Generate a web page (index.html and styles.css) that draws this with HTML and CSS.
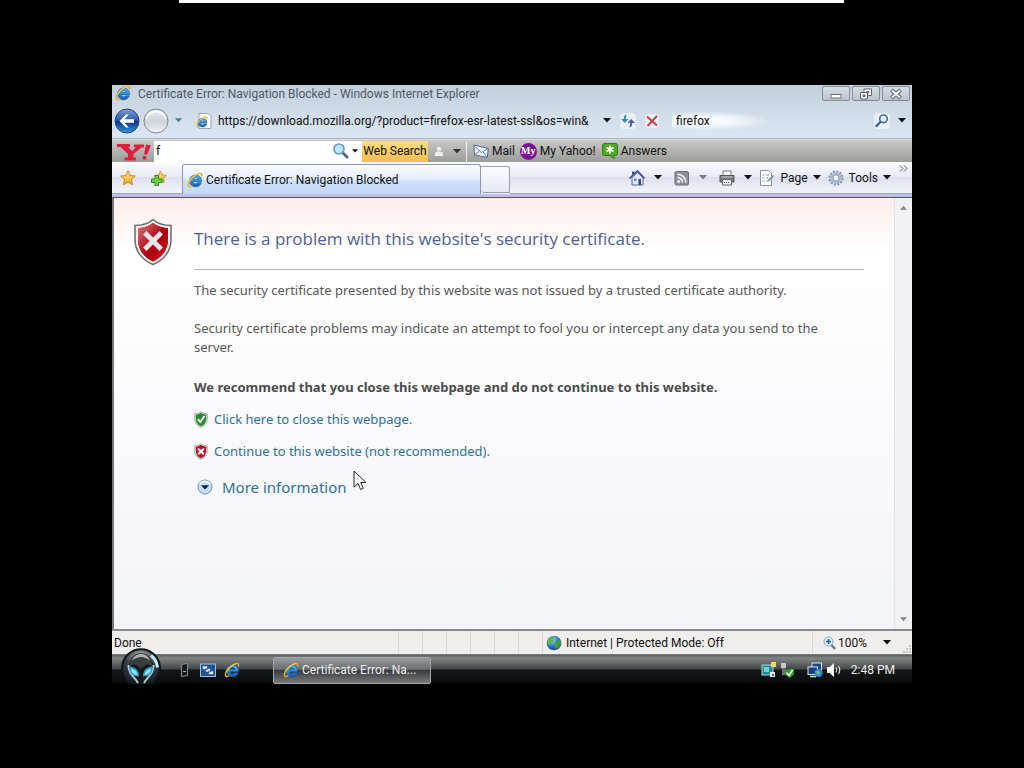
FILE: index.html
```html
<!DOCTYPE html>
<html lang="en">
<head>
<meta charset="utf-8">
<title>Certificate Error: Navigation Blocked</title>
<link rel="stylesheet" href="styles.css">
</head>
<body>
<svg class="defs" aria-hidden="true">
  <defs>
    <linearGradient id="ieBlue" x1="0" y1="0" x2="0" y2="1"><stop offset="0" stop-color="#4cbcf3"/><stop offset="1" stop-color="#1259b4"/></linearGradient>
    <linearGradient id="orb" x1="0" y1="0" x2="0" y2="1"><stop offset="0" stop-color="#7d9fd6"/><stop offset=".48" stop-color="#2a57a8"/><stop offset=".5" stop-color="#0d2f82"/><stop offset="1" stop-color="#2f9be0"/></linearGradient>
    <linearGradient id="orbGrey" x1="0" y1="0" x2="0" y2="1"><stop offset="0" stop-color="#e9edf2"/><stop offset=".5" stop-color="#ccd4dd"/><stop offset="1" stop-color="#eef1f5"/></linearGradient>
    <linearGradient id="red" x1="0" y1="0" x2="1" y2="1"><stop offset="0" stop-color="#dd7a80"/><stop offset=".45" stop-color="#b3121f"/><stop offset=".6" stop-color="#a80410"/><stop offset="1" stop-color="#e02020"/></linearGradient>
    <linearGradient id="gold" x1="0" y1="0" x2="0" y2="1"><stop offset="0" stop-color="#ffe98a"/><stop offset="1" stop-color="#f2a51c"/></linearGradient>
    <radialGradient id="globeFill" cx=".4" cy=".3" r=".75"><stop offset="0" stop-color="#8fd0ff"/><stop offset=".6" stop-color="#2a6fc4"/><stop offset="1" stop-color="#153f86"/></radialGradient>
    <radialGradient id="startFill" cx=".5" cy=".2" r=".9"><stop offset="0" stop-color="#a9acaf"/><stop offset=".45" stop-color="#3b4044"/><stop offset="1" stop-color="#07141a"/></radialGradient>
  </defs>
  <symbol id="ie" viewBox="0 0 16 16">
    <path d="M14.600 9.700H6.200c.1 1.300 1 2.100 2.400 2.100.9 0 1.600-.3 2.100-1h3.600c-.8 2.700-3 4-5.700 4-3.600 0-6-2.400-6-5.800s2.500-6 6-6c3.700 0 6.200 2.600 6 6.700zM6.300 7.300h4.600c-.1-1.100-1-1.800-2.200-1.800s-2.200.7-2.400 1.800z" fill="url(#ieBlue)" stroke="#15589f" stroke-width=".6"/>
    <path d="M14.600 4c.5-2.400-.9-3.100-3.200-2.300C7.500 3 3 7.200 1.700 11c-1 3.200.3 4.300 3 2.900" fill="none" stroke="#e5ab22" stroke-width="1.500" stroke-linecap="round"/>
    <path d="M12.500 1.700C9 2.200 4.500 6 2.600 9.500" fill="none" stroke="#f9e07a" stroke-width=".7"/>
  </symbol>
  <symbol id="caret" viewBox="0 0 8 5"><path d="M0 0h8L4 4.500z" fill="currentColor"/></symbol>
  <symbol id="star" viewBox="0 0 16 16"><path d="M8 .8l2.200 4.700 5.100.6-3.800 3.500 1 5.100L8 12.200l-4.500 2.500 1-5.100L.7 6.100l5.100-.6z" fill="url(#gold)" stroke="#c98516" stroke-width="1" stroke-linejoin="round"/></symbol>
  <symbol id="shield" viewBox="0 0 40 48">
    <path d="M20 1.500C15 6 8 7.500 2 7.500v14C2 33 9 42 20 46.500 31 42 38 33 38 21.500v-14c-6 0-13-1.500-18-6z" fill="#f1efef" stroke="#676c69" stroke-width="1.500"/>
    <path d="M20 5C15.500 8.500 10 10 5 10.300v11.200C5 31.500 11 39.500 20 43.400c9-3.900 15-11.900 15-21.900V10.300C30 10 24.500 8.500 20 5z" fill="currentColor"/>
  </symbol>
</svg>

<div class="top-strip"></div>
<main class="desktop">
  <section class="window">
    <header class="titlebar">
      <svg class="i16"><use href="#ie"/></svg>
      <h1 class="title">Certificate Error: Navigation Blocked - Windows Internet Explorer</h1>
      <div class="controls">
        <button class="control" aria-label="Minimize"><svg width="12" height="12" viewBox="0 0 12 12"><rect x="1" y="6.500" width="10" height="3.500" fill="#fff" stroke="#6a7078"/></svg></button>
        <button class="control" aria-label="Restore"><svg width="14" height="12" viewBox="0 0 14 12"><path d="M5 1h7.500v6.500H5z M7.500 3.500h2.500v1.500H7.500z" fill="#fff" stroke="#5d636b"/><path d="M1.500 4.500h7v6.500h-7z" fill="#fff" stroke="#5d636b"/><path d="M4 7h2v1.500H4z" fill="#aaa" stroke="#5d636b"/></svg></button>
        <button class="control" aria-label="Close"><svg width="14" height="12" viewBox="0 0 14 12"><path d="M2.500 2l9 8m0-8l-9 8" stroke="#5d636b" stroke-width="4"/><path d="M3 2.400l8 7.200m0-7.200l-8 7.200" stroke="#fff" stroke-width="2"/></svg></button>
      </div>
    </header>

    <nav class="navbar">
      <button class="plain" aria-label="Back"><svg width="26" height="26" viewBox="0 0 26 26"><circle cx="13" cy="13" r="12" fill="url(#orb)" stroke="#26447c"/><path d="M5.500 13L12 6.500h2.800l-4.300 4.700H20v3.600h-9.500l4.300 4.700H12z" fill="#fff"/></svg></button>
      <button class="plain" aria-label="Forward"><svg width="26" height="26" viewBox="0 0 26 26"><circle cx="13" cy="13" r="12" fill="url(#orbGrey)" stroke="#7f8893"/><path d="M3 11a10.500 10.500 0 0 1 20 0" fill="none" stroke="#fff" stroke-width="1.500"/></svg></button>
      <button class="plain recent" aria-label="Recent pages"><svg class="caret"><use href="#caret"/></svg></button>
      <svg class="i16 page-icon" viewBox="0 0 16 16"><path d="M3 .5h9l3 3v12H3z" fill="#fff" stroke="#9ba3ac"/><svg x="0" y="3" width="12" height="12"><use href="#ie"/></svg></svg>
      <input class="address" type="text" aria-label="Address" value="https://download.mozilla.org/?product=firefox-esr-latest-ssl&amp;os=win&amp;">
      <button class="plain address-drop" aria-label="Address history"><svg class="caret"><use href="#caret"/></svg></button>
      <button class="plain glow" aria-label="Refresh"><svg width="16" height="16" viewBox="0 0 16 16"><path d="M7 1.500C4.500 1.800 3.800 3 3.800 6H1l3.800 4L8.500 6H5.800c0-2 .2-3 1.200-4.500z" fill="#3f86b8"/><path d="M9 14.500c2.500-.3 3.200-1.500 3.200-4.500H15l-3.800-4L7.500 10h2.700c0 2-.2 3-1.200 4.500z" fill="#4a5fa0"/></svg></button>
      <button class="plain glow stop" aria-label="Stop"><svg width="14" height="14" viewBox="0 0 14 14"><path d="M2 2.500l10 9M12 2L2.500 12" stroke="#c8414e" stroke-width="2"/></svg></button>
      <input class="search" type="text" aria-label="Search" value="firefox">
      <button class="plain glow" aria-label="Go"><svg width="16" height="16" viewBox="0 0 16 16"><circle cx="9.500" cy="5.800" r="3.800" fill="#e4f2fb" stroke="#3f7196" stroke-width="1.600"/><path d="M6.700 8.700L1.800 13.600" stroke="#3a5f85" stroke-width="2.200"/></svg></button>
      <button class="plain search-drop" aria-label="Search options"><svg class="caret"><use href="#caret"/></svg></button>
    </nav>

    <div class="yahoo">
      <svg class="ylogo" width="40" height="20" viewBox="0 0 40 20" role="img" aria-label="Yahoo"><path d="M3 3h13v3h-2l4 4 4-3.500h-2v-3h10v3h-2.500l-8 6.500v3.500h2.500v3H10.500v-3H14v-3.500L6.500 6H3z" fill="#df1f3d"/><path d="M32 3.500l5 1-4 9h-3z" fill="#df1f3d"/><circle cx="30.500" cy="16.800" r="2" fill="#df1f3d"/></svg>
      <div class="ybox">
        <input class="yinput" type="text" aria-label="Yahoo search" value="f">
        <svg width="18" height="18" viewBox="0 0 18 18"><path d="M10.500 10.500l5.500 5.500" stroke="#45637d" stroke-width="2.600"/><circle cx="7" cy="7" r="5" fill="#bfe5fb" stroke="#6b9cc4" stroke-width="1.700"/></svg>
        <svg class="caret small"><use href="#caret"/></svg>
      </div>
      <button class="websearch">Web Search</button>
      <button class="plain person" aria-label="Profile"><svg width="14" height="14" viewBox="0 0 14 14"><circle cx="7" cy="5" r="2.200" fill="#eee"/><path d="M3 12V9.500C3 8 4.500 7.500 7 7.500s4 .5 4 2V12z" fill="#eee"/></svg><svg class="caret"><use href="#caret"/></svg></button>
      <a class="ylink first" href="#"><svg class="i16" viewBox="0 0 16 16"><path d="M.8 2l14.500 3.500-1 9L1.500 12z" fill="#f5f9ff" stroke="#4d6796"/><path d="M.8 2.500l7.700 7 6.500-4M1.500 12l5-4M14.300 14.300L10 8.800" fill="none" stroke="#5e7aab"/></svg>Mail</a>
      <a class="ylink" href="#"><span class="my">My</span>My Yahoo!</a>
      <a class="ylink answers" href="#"><svg class="i16" viewBox="0 0 16 16"><path d="M2.500.5h11a2 2 0 0 1 2 2v8a2 2 0 0 1-2 2H12V16l-4-3.500H2.500a2 2 0 0 1-2-2v-8a2 2 0 0 1 2-2z" fill="#52a928" stroke="#2f7d14"/><path d="M8 2.500v8M4.500 4.500l7 4M11.500 4.500l-7 4" stroke="#fff" stroke-width="1.600"/></svg>Answers</a>
    </div>

    <div class="tabs">
      <div class="favs">
        <button class="plain" aria-label="Favorites"><svg class="i16"><use href="#star"/></svg></button>
        <button class="plain" aria-label="Add to favorites"><svg class="i16" viewBox="0 0 16 16"><svg x="3" y="0" width="13" height="14"><use href="#star"/></svg><path d="M4 5.500h3.500V9H11v3.500H7.500V16H4v-3.500H.5V9H4z" fill="#6fd04a" stroke="#2c8a1d"/></svg></button>
      </div>
      <button class="tab"><svg class="i16"><use href="#ie"/></svg>Certificate Error: Navigation Blocked</button>
      <button class="newtab" aria-label="New tab"></button>
      <div class="commands">
        <button class="plain" aria-label="Home"><svg class="i16" viewBox="0 0 16 16"><path d="M3 7.500V15h11V7.500L8.500 2.500z" fill="#dfe8f4" stroke="#59698c"/><path d="M3 1.500h2.500v3H3z" fill="#4e3f92"/><path d="M.5 8.500L8.500 1l7 7.500" fill="none" stroke="#46508e" stroke-width="1.600"/><path d="M9.500 9h2.500v6H9.500z" fill="#35497e"/><path d="M5 8.500h2.500V11H5z" fill="#5d90c9"/></svg><svg class="caret"><use href="#caret"/></svg></button>
        <button class="plain muted" aria-label="Feeds"><svg class="i16" viewBox="0 0 16 16"><rect x="1" y="1.500" width="13.500" height="13.500" rx="1.500" fill="#8d9197" stroke="#6d7176"/><circle cx="4.700" cy="11.500" r="1.400" fill="#fff"/><path d="M3.500 7.500a5 5 0 0 1 5 5M3.500 4.200a8.300 8.300 0 0 1 8.300 8.300" fill="none" stroke="#fff" stroke-width="1.500"/></svg><svg class="caret"><use href="#caret"/></svg></button>
        <button class="plain" aria-label="Print"><svg class="i16" viewBox="0 0 16 16"><path d="M4 1h8v5H4z" fill="#fff" stroke="#777"/><path d="M1 5.500h14v6.500H1z" fill="#777b83" stroke="#50545b"/><path d="M2.500 7h11" stroke="#c8ccd2"/><path d="M3.500 9.500h9V15h-9z" fill="#f4f4f4" stroke="#666"/><path d="M5 12.500h6" stroke="#555" stroke-dasharray="1 1"/></svg><svg class="caret"><use href="#caret"/></svg></button>
        <button class="plain tight"><svg class="i16" viewBox="0 0 16 16"><path d="M1.500.5h8l3 3v12h-11z" fill="#fafcfd" stroke="#8b939b"/><path d="M3.500 5h2M7 5h3M3.500 8h2M7 8h2M3.500 11h2M7 11h3" stroke="#8396a8"/><path d="M9.500 10.500l5-5" stroke="#8e9d8c" stroke-width="2"/></svg><span>Page</span><svg class="caret"><use href="#caret"/></svg></button>
        <button class="plain tight"><svg class="i16" viewBox="0 0 16 16"><circle cx="8" cy="8" r="6.600" fill="none" stroke="#8799af" stroke-width="2" stroke-dasharray="2.200 1.255"/><circle cx="8" cy="8" r="4.500" fill="#eef3f8" stroke="#a5b9cf" stroke-width="2.600"/><circle cx="8" cy="8" r="3" fill="none" stroke="#7389a5" stroke-width=".7"/></svg><span>Tools</span><svg class="caret"><use href="#caret"/></svg></button>
        <button class="plain more" aria-label="More commands"><svg width="9" height="7" viewBox="0 0 9 7"><path d="M1 .5l3 3-3 3M5 .5l3 3-3 3" fill="none" stroke="#555b6a"/></svg></button>
      </div>
    </div>

    <div class="viewport">
      <article class="page">
        <svg class="big-shield" viewBox="0 0 40 48"><g color="#a90a18"><use href="#shield"/></g><path d="M20 5C15.500 8.500 10 10 5 10.300v11.200C5 31.500 11 39.500 20 43.400c9-3.900 15-11.900 15-21.900V10.300C30 10 24.500 8.500 20 5z" fill="url(#red)"/><path d="M13.500 16.500l13 13M26.500 16.500l-13 13" stroke="#ece4e8" stroke-width="4.800" stroke-linecap="square"/></svg>
        <div class="message">
          <h2 class="heading">There is a problem with this website's security certificate.</h2>
          <p class="para">The security certificate presented by this website was not issued by a trusted certificate authority.</p>
          <p class="para wide">Security certificate problems may indicate an attempt to fool you or intercept any data you send to the server.</p>
          <p class="para strong">We recommend that you close this webpage and do not continue to this website.</p>
          <a class="action" href="#"><svg width="14" height="17" viewBox="0 0 40 48"><g color="#2b8a2a"><use href="#shield"/></g><path d="M11 23l7 8L30 14" fill="none" stroke="#fff" stroke-width="5.500"/></svg>Click here to close this webpage.</a>
          <a class="action" href="#"><svg width="14" height="17" viewBox="0 0 40 48"><g color="#b2182b"><use href="#shield"/></g><path d="M12 16l16 16M28 16L12 32" stroke="#fff" stroke-width="5.500"/></svg>Continue to this website (not recommended).</a>
          <a class="action info" href="#"><svg width="16" height="16" viewBox="0 0 16 16"><circle cx="8" cy="8" r="7" fill="#c6dff5" stroke="#7290b0"/><path d="M3 5a6 6 0 0 1 10 0" fill="none" stroke="#fff" stroke-width="1.500"/><path d="M4 6.300h8L8 10.500z" fill="#10204a"/></svg>More information</a>
        </div>
      </article>
      <div class="scrollbar"><svg class="caret up"><use href="#caret"/></svg><svg class="caret"><use href="#caret"/></svg></div>
      <svg class="cursor" width="15" height="21" viewBox="0 0 15 21"><path d="M1 1v16l4-3.500 2.700 6 2.600-1.200-2.600-5.800H13z" fill="#fff" stroke="#222"/></svg>
    </div>

    <footer class="status">
      <span class="done">Done</span>
      <span class="cell"></span><span class="cell"></span><span class="cell"></span><span class="cell"></span><span class="cell"></span><span class="cell"></span>
      <span class="zone"><svg class="i16" viewBox="0 0 16 16"><circle cx="8" cy="8" r="7.300" fill="url(#globeFill)"/><path d="M2 4.500C4 1.500 8 1 9 2L7 4.500 7.500 7 4.500 8 3.500 11 1 8z" fill="#5cb544"/><path d="M10 6l4-1 1 4-3.500 5-3-1L9 10z" fill="#3d9c3f"/></svg>Internet | Protected Mode: Off</span>
      <button class="plain zoom"><svg width="13" height="14" viewBox="0 0 13 14"><path d="M8 8.500l4 4.500" stroke="#77787c" stroke-width="2.500"/><circle cx="5.500" cy="5.500" r="4.500" fill="#e6f4ff" stroke="#7ea6cc"/><path d="M5.500 3v5M3 5.500h5" stroke="#225f9e" stroke-width="1.600"/></svg><span>100%</span><svg class="caret"><use href="#caret"/></svg></button>
      <svg class="grip" width="10" height="10" viewBox="0 0 10 10"><path d="M7 1h2v2H7zM7 4h2v2H7zM7 7h2v2H7zM4 4h2v2H4zM4 7h2v2H4zM1 7h2v2H1z" fill="#c9c7c4"/></svg>
    </footer>
  </section>

  <section class="taskbar">
    <button class="plain start" aria-label="Start"><svg width="42" height="36" viewBox="0 0 42 36"><path d="M6 32A19 19 0 1 1 36 32L33 36H9z" fill="url(#startFill)"/><path d="M6 32A19 19 0 1 1 36 32" fill="none" stroke="#0d1519" stroke-width="2"/><path d="M31 7.500c4 3 6 7 6.500 12" fill="none" stroke="#bde9ef" stroke-width="3"/><path d="M21 7C13 7 9 12 9 18c0 7 6 12 9 17h6c3-5 9-10 9-17 0-6-4-11-12-11z" fill="#17191b"/><path d="M10 19C9.500 9 15 5 21 5s11.500 4 11 14c-3-4-7-3-11 2-4-5-8-6-11-2z" fill="#3a3d40"/><path d="M12 13C14 7 18 6 21 6s7 1 9 7c-3-3-6-4-9-4s-6 1-9 4z" fill="#aeb1b4"/><path d="M8.500 17c0 10 6 11 9.500 18M33.500 17c0 10-6 11-9.500 18" fill="none" stroke="#b7c7cf" stroke-width="2"/><path d="M9 18.500c7 .5 10 4 10 10-6 0-10-3-10-10zM33 18.500c-7 .5-10 4-10 10 6 0 10-3 10-10z" fill="#2f9fc9"/><path d="M11 20.500c4 1 6 3 6.500 6.500-4-.5-6.500-3-6.500-6.500zM31 20.500c-4 1-6 3-6.500 6.500 4-.5 6.500-3 6.500-6.500z" fill="#8fe4fa"/></svg></button>
    <div class="quick">
      <button class="plain" aria-label="Device"><svg width="10" height="16" viewBox="0 0 10 16"><path d="M1.500 2.500l6-1v12l-6 1z" fill="#17191c" stroke="#8b8f93"/><path d="M3 9.500h3" stroke="#aaa"/></svg></button>
      <button class="plain" aria-label="Switch windows"><svg width="16" height="16" viewBox="0 0 16 16"><rect x=".5" y="2" width="15" height="12.500" fill="#23508f" stroke="#9dbde0"/><path d="M2.500 4h5v3.500h-5zM5.500 6.500h5V10h-5zM8.500 9h5v3.500h-5z" fill="#e8f1fc" stroke="#23508f" stroke-width=".7"/></svg></button>
      <button class="plain" aria-label="Internet Explorer"><svg class="i16"><use href="#ie"/></svg></button>
    </div>
    <button class="task"><svg class="i16"><use href="#ie"/></svg>Certificate Error: Na...</button>
    <div class="tray">
      <svg class="i16" viewBox="0 0 16 16"><rect x="1" y="3" width="11" height="10" fill="#1f8b94" stroke="#a8dce0"/><path d="M3 5h5v5H3z" fill="#73d1cd"/><path d="M10 0h5v5h-5z" fill="#f0d862"/><path d="M9 10h5v5H9z" fill="#eee"/><path d="M11 12h2v2h-2z" fill="#555"/></svg>
      <svg class="i16" viewBox="0 0 16 16"><path d="M1 1h5v5H1z" fill="#c8c8c8"/><path d="M2 6h3v7H2z" fill="#707070"/><path d="M5 7.500l9-1v6L10 16l-5-3z" fill="#2d9a27"/><path d="M6.500 10.500l2.500 3 3.500-5.500" fill="none" stroke="#fff" stroke-width="1.500"/></svg>
      <svg class="i16 net" viewBox="0 0 16 16"><rect x="5" y="1" width="9.500" height="7.500" fill="#1c4a86" stroke="#d9e9f5"/><rect x="1" y="5" width="9.500" height="7.500" fill="#173f76" stroke="#d9e9f5"/><path d="M3 14.500h6" stroke="#cfe0ee" stroke-width="1.500"/><circle cx="11.500" cy="11" r="4" fill="#2f87cf"/><path d="M9 9.500l3-1 1 2-2 3z" fill="#72c658"/></svg>
      <svg class="i16" viewBox="0 0 16 16"><path d="M1 5h2.500L8 1v14l-4.500-4H1z" fill="#f4f4f4"/><path d="M10 5.500q1.500 2.500 0 5M12.500 4q2.500 4 0 8" fill="none" stroke="#ddd" stroke-width="1.200"/></svg>
      <time class="clock">2:48 PM</time>
    </div>
  </section>
</main>
</body>
</html>
```
FILE: styles.css
```css
* { box-sizing: border-box; }

body {
  margin: 0;
  min-height: 100vh;
  background: #000;
  color: #111;
  font: 12px/16px Roboto, "Noto Sans", sans-serif;
  display: flex;
  flex-direction: column;
}

button, input { font: inherit; color: inherit; }
input { border: 0; padding: 0; min-width: 0; background: transparent; outline: 0; }
h1, h2, p { margin: 0; }
a { text-decoration: none; color: inherit; }
svg { display: block; flex: none; }

.defs { position: absolute; width: 0; height: 0; }
.i16 { width: 16px; height: 16px; }
.caret { width: 8px; height: 5px; }
.caret.small { width: 6px; height: 4px; }
.plain {
  display: flex;
  align-items: center;
  border: 0;
  padding: 0;
  background: transparent;
}

.top-strip { height: 3px; margin: 0 180px 0 179px; background: #fff; }

.desktop {
  flex: 1;
  display: flex;
  flex-direction: column;
  padding: 82px 112px 83px;
}

.window {
  flex: 1;
  display: flex;
  flex-direction: column;
  background: linear-gradient(#c3cfdb, #dbe7f3 54px);
}

.titlebar { display: flex; height: 18px; padding: 0 2px 0 3px; gap: 7px; }
.title { flex: 1; font-size: 12px; line-height: 18px; font-weight: 400; color: #4f5b69; white-space: nowrap; }
.controls { display: flex; gap: 2px; padding-top: 1px; }
.control {
  width: 28px;
  height: 15px;
  padding: 0;
  display: flex;
  align-items: center;
  justify-content: center;
  border: 1px solid #858e98;
  border-radius: 2px;
  background: linear-gradient(#d5dde5, #bcc5cf);
}

.navbar { display: flex; align-items: center; height: 36px; padding: 0 6px 0 2px; gap: 3px; border-bottom: 1px solid #a9b1ba; }
.recent { color: #3c8088; margin-left: 3px; }
.recent .caret { width: 7px; }
.page-icon { margin-left: 11px; }
.address { flex: 382; width: 0; padding-left: 3px; }
.address-drop { width: 14px; }
.glow { border-radius: 4px; background: rgba(255, 255, 255, .5); }
.stop { margin-left: 6px; }
.search {
  flex: 195;
  width: 0;
  height: 18px;
  margin-left: 10px;
  padding-left: 4px;
  background: radial-gradient(ellipse 70px 10px at 30px 9px, #f6faff 40%, transparent);
}
.search-drop { margin-left: 5px; }

.yahoo {
  display: flex;
  height: 23px;
  align-items: center;
  background: linear-gradient(#c9c9c7, #9c9c9a);
  border-top: 1px solid #dcdfe0;
}
.ylogo { margin-left: 2px; }
.ybox { flex: 0 1 208px; display: flex; align-items: center; height: 21px; padding: 0 4px 0 2px; gap: 2px; background: #fff; }
.yinput { flex: 1; }
.websearch {
  height: 21px;
  width: 66px;
  padding: 0;
  border: 0;
  background: linear-gradient(#fbdc86, #f2bd4f);
  white-space: nowrap;
}
.person { gap: 7px; padding: 0 5px 0 4px; color: #333; height: 21px; border-right: 1px solid #eee; }
.ylink { display: flex; align-items: center; gap: 3px; margin-left: 5px; white-space: nowrap; }
.ylink.first { margin-left: 6px; }
.ylink.answers { margin-left: 6px; }
.my {
  width: 17px;
  height: 17px;
  border-radius: 50%;
  background: #7b1490;
  color: #fff;
  font: bold 10px/16px "Liberation Serif", serif;
  text-align: center;
}

.tabs {
  display: flex;
  height: 35px;
  background: linear-gradient(#fafbfe, #e9ebf5 45%, #dcdff0 47%, #eef0fa 85%);
  border-bottom: 3px solid #bcc2e6;
}
.favs { display: flex; align-items: flex-start; gap: 15px; width: 70px; padding: 8px; border-bottom: 1px solid #a4a9ba; }
.tab {
  flex: 0 1 299px;
  margin-top: 2px;
  display: flex;
  align-items: center;
  gap: 3px;
  padding: 0 4px;
  border: 1px solid #8f97ab;
  border-bottom: 0;
  border-radius: 3px 3px 0 0;
  background: linear-gradient(#fbfdff, #e2edfc 48%, #cbdffa 55%, #c7d8f6);
  white-space: nowrap;
}
.newtab { width: 29px; margin: 4px 0 1px; border: 1px solid #989eae; border-left: 0; border-radius: 0 3px 0 3px; background: linear-gradient(#fbfbfe, #e6e8f3); }
.commands {
  flex: 1;
  display: flex;
  justify-content: flex-end;
  align-items: center;
  gap: 12px;
  padding: 0 4px 0 0;
  border-bottom: 1px solid #a4a9ba;
}
.commands .plain { gap: 9px; }
.commands .tight { gap: 5px; margin-left: -5px; }
.commands .more { align-self: flex-start; margin: 3px 0 0 -4px; }
.muted .caret { color: #777b88; }

.viewport {
  position: relative;
  flex: 1;
  display: flex;
  border-top: 1px solid #555;
  border-left: 2px solid #77787c;
  background: linear-gradient(#ffeded, #fff 55px, #fdfdfe 120px, #f3f4f8);
}
.page { flex: 1; display: flex; gap: 20px; padding: 20px 30px 0 19px; }
.big-shield { width: 40px; height: 48px; }
.message { flex: 1; display: flex; flex-direction: column; align-items: flex-start; margin-left: 1px; color: #575757; font-family: "Noto Sans", "Open Sans", sans-serif; }
.heading {
  align-self: stretch;
  padding: 8px 0 18px;
  border-bottom: 1px solid #b4b4b4;
  font-family: "Open Sans", "Noto Sans", sans-serif;
  font-size: 17px;
  line-height: 25px;
  font-weight: 400;
  color: #4a648f;
}
.para { margin-top: 11px; font-size: 13px; line-height: 19px; }
.para.wide { margin-top: 19px; max-width: 640px; }
.para.strong { margin-top: 21px; margin-bottom: 6px; font-weight: 700; color: #4b4b4b; }
.action { display: flex; align-items: center; gap: 6px; height: 32px; font-size: 13px; color: #2f7190; }
.action.info { height: 40px; margin-left: 3px; gap: 9px; font-size: 15px; }
.scrollbar {
  width: 18px;
  display: flex;
  flex-direction: column;
  align-items: center;
  justify-content: space-between;
  padding: 7px 0;
  background: #f1f0f2;
  border-left: 1px solid #e4e4e8;
  color: #888;
}
.scrollbar .caret { width: 7px; }
.up { transform: rotate(180deg); }
.cursor { position: absolute; left: 239px; top: 272px; }

.status {
  display: flex;
  height: 26px;
  align-items: stretch;
  line-height: 24px;
  background: #f0eeed;
  border-top: 2px solid #8a8a8c;
  border-bottom: 1px solid #777;
}
.done { flex: 1; padding-left: 2px; }
.cell { width: 24px; border-left: 1px solid #dcdad9; }
.zone { display: flex; align-items: center; gap: 4px; flex: 0 1 270px; padding-left: 3px; border-left: 1px solid #dcdad9; white-space: nowrap; }
.zoom { gap: 2px; padding-left: 10px; border-left: 1px solid #dcdad9; }
.zoom .caret { margin-left: 14px; }
.grip { align-self: flex-end; margin-left: 11px; }

.taskbar {
  display: flex;
  align-items: center;
  height: 30px;
  background: linear-gradient(#5b5d5e, #828383 3px, #444647 14px, #151718 15px, #0a0b0c 27px, #000);
  color: #eee;
}
.start { position: relative; align-self: flex-end; padding: 0 0 1px 8px; }
.quick { display: flex; align-items: center; gap: 8px; margin-left: 18px; }
.quick .plain:first-child { margin-right: 2px; }
.task {
  flex: 0 1 158px;
  height: 27px;
  margin-left: 33px;
  display: flex;
  align-items: center;
  gap: 3px;
  padding: 0 9px;
  border: 1px solid #a5a8a9;
  border-radius: 2px;
  background: linear-gradient(#999c9d, #6b6e70 45%, #393c3e 50%, #77797b);
  white-space: nowrap;
}
.tray { flex: 1; display: flex; align-items: center; justify-content: flex-end; gap: 3px; padding-right: 17px; }
.net { margin-left: 8px; }
.clock { margin-left: 6px; }
```
